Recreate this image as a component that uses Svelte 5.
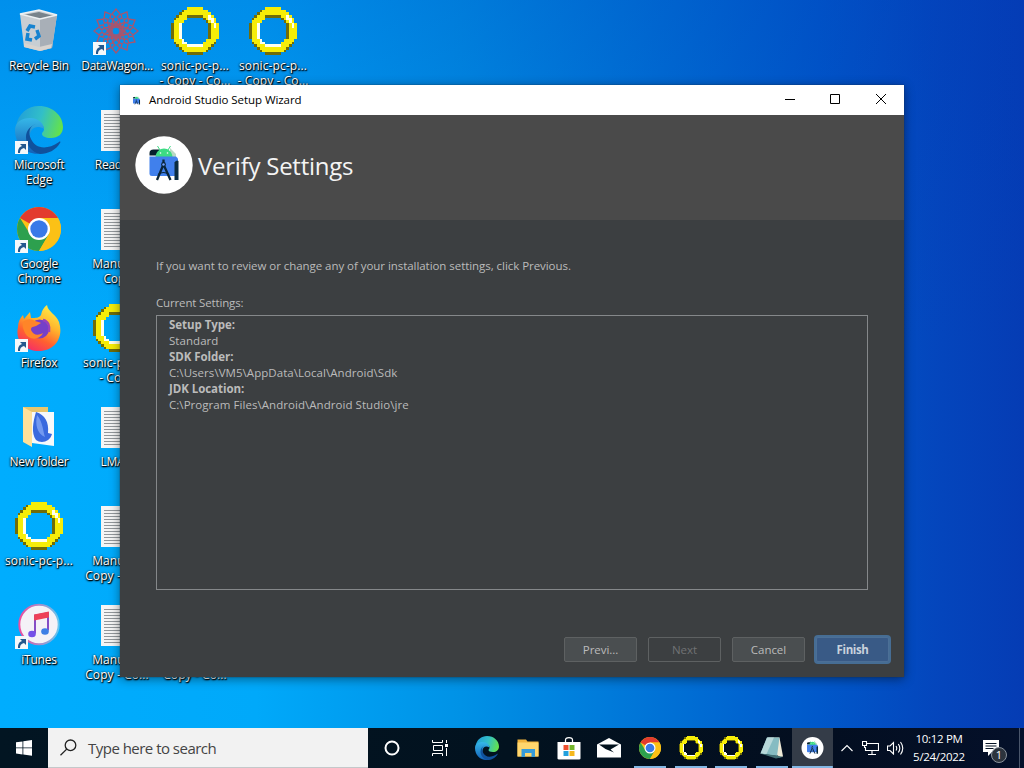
<script>
	// desktop icons, one array per column; null leaves a grid cell empty
	const columns = [
		[
			{ icon: 'bin', lines: ['Recycle Bin'] },
			{ icon: 'edge', lines: ['Microsoft', 'Edge'], shortcut: true },
			{ icon: 'chrome', lines: ['Google', 'Chrome'], shortcut: true },
			{ icon: 'firefox', lines: ['Firefox'], shortcut: true },
			{ icon: 'folder', lines: ['New folder'] },
			{ icon: 'ring', lines: ['sonic-pc-p...'] },
			{ icon: 'itunes', lines: ['iTunes'], shortcut: true }
		],
		[
			{ icon: 'wagon', lines: ['DataWagon...'], shortcut: true },
			{ icon: 'doc', lines: ['Readme'] },
			{ icon: 'doc', lines: ['Manual -', 'Copy'] },
			{ icon: 'ring', lines: ['sonic-pc-p...', '- Copy'] },
			{ icon: 'doc', lines: ['LMAO'] },
			{ icon: 'doc', lines: ['Manual -', 'Copy - Co...'] },
			{ icon: 'doc', lines: ['Manual -', 'Copy - Co...'] }
		],
		[
			{ icon: 'ring', lines: ['sonic-pc-p...', '- Copy - Co...'] },
			null, null, null, null, null,
			{ icon: 'doc', lines: ['Manual -', 'Copy - Co...'] }
		],
		[{ icon: 'ring', lines: ['sonic-pc-p...', '- Copy - Co...'] }]
	];

	const settings = [
		['Setup Type:', 'Standard'],
		['SDK Folder:', 'C:\\Users\\VM5\\AppData\\Local\\Android\\Sdk'],
		['JDK Location:', 'C:\\Program Files\\Android\\Android Studio\\jre']
	];

	const apps = [
		{ icon: 'edge' },
		{ icon: 'explorer' },
		{ icon: 'store' },
		{ icon: 'mail' },
		{ icon: 'chrome', open: true },
		{ icon: 'ring', open: true },
		{ icon: 'ring', open: true },
		{ icon: 'notepad', open: true },
		{ icon: 'studio', open: true, active: true }
	];

	// ring sprite on an 18x18 grid
	function ringShade(x, y) {
		const dx = x - 8.5;
		const dy = y - 8.5;
		const r = Math.hypot(dx, dy);
		if (r > 9.1 || r < 5.5) return null;
		const side = dx - dy; // positive towards the top right
		if (r > 8.4 && side < 5) return '#706c08';
		if (r < 6.3 && side > 1) return '#706c08';
		if (r < 6.4 && side < -1) return '#fffff0';
		if (r > 7 && r < 8.2 && side > 8 && dx > 5) return '#fffff0';
		return '#f6ed08';
	}
	const pixels = [];
	for (let y = 0; y < 18; y++) {
		for (let x = 0; x < 18; x++) {
			const fill = ringShade(x, y);
			if (fill) pixels.push({ x, y, fill });
		}
	}

	const petals = [0, 30, 60, 90, 120, 150, 180, 210, 240, 270, 300, 330];
	const docLines = [8, 11, 14, 17, 20, 23, 26, 29, 32, 35, 38, 41];
</script>

{#snippet studioArt()}
	<path d="M14.500 17q0-3.500 4-3.500h6v6h-10z" fill="#06202c" />
	<path d="M35 12l6 6v4h-6z" fill="#b9d8c5" />
	<path d="M20.500 21c1-11.500 16-11.500 17 0z" fill="#3ddc84" />
	<path d="M22.500 10l2.500 4M35.500 10L33 14" stroke="#3ddc84" stroke-width="1" />
	<circle cx="25.500" cy="17" r=".8" fill="#fff" /><circle cx="32.500" cy="17" r=".8" fill="#fff" />
	<path d="M14.500 20.500H41l2 2V40H17q-2.500 0-2.500-2.500z" fill="#4080ec" />
	<path d="M39.500 26.500q2-3 4-1.500v19h-4z" fill="#0a2c40" />
	<path d="M28.500 23.500V28M27.800 30L22 44M29.200 30L35.500 44" fill="none" stroke="#0a2538" stroke-width="2.300" />
	<path d="M23 38.500q5.500-4 11 0" fill="none" stroke="#0a2538" stroke-width="1.100" />
	<circle cx="28.500" cy="28.500" r="2.400" fill="#0a2538" /><circle cx="28.500" cy="28.500" r="1.200" fill="#6fa0ff" />
{/snippet}

{#snippet art(name)}
	<svg viewBox="0 0 48 48" class="art">
		{#if name === 'bin'}
			<path d="M5 7l19-4 18 5-5 33-12 3-16-4z" fill="#c8ced3" />
			<path d="M25 11l17-3-5 33-12 3z" fill="#a8afb7" />
			<path d="M8 8l16-3 15 4-15 3z" fill="#78838b" />
			<path d="M5 7l19-4 18 5-17 4z" fill="none" stroke="#edf1f3" stroke-width="1.500" />
			<path d="M9 36l15 4 13-3-1 4-11 3-16-4z" fill="#d8d4d0" />
			<path d="M12 24l3-5 5 1M22 23l2 6-4 3M17 33l-5-1 1-6" fill="none" stroke="#1683d0" stroke-width="3.500" />
		{:else if name === 'wagon'}
			<g fill="none" stroke="#a9556d" stroke-width="1.300">
				{#each petals as angle}
					<path transform="rotate({angle} 23 24)" d="M23 17l-3-5 2-2-3-3 4-5 4 5-3 3 2 2-3 5M19 21l4-6 4 6" />
				{/each}
				<circle cx="23" cy="24" r="7" /><circle cx="23" cy="24" r="4" />
			</g>
		{:else if name === 'ring'}
			<g shape-rendering="crispEdges" transform="scale(2.6667)">
				{#each pixels as p}
					<rect x={p.x} y={p.y} width="1" height="1" fill={p.fill} />
				{/each}
			</g>
		{:else if name === 'edge'}
			<defs>
				<linearGradient id="edgeTop" x1="0" y1=".4" x2="1" y2=".6">
					<stop offset="0" stop-color="#229fd8" /><stop offset=".5" stop-color="#32bfc8" /><stop offset="1" stop-color="#66e346" />
				</linearGradient>
				<linearGradient id="edgeSide" x1="0" y1="0" x2="0" y2="1">
					<stop offset="0" stop-color="#36b7e8" /><stop offset="1" stop-color="#1260b8" />
				</linearGradient>
			</defs>
			<path d="M1 21C3 7 13 0 24 0c14 0 24 10 24 21 0 7-5 11-12 11-6 0-9-2-9-4 0-2 2-2 2-5 0-5-6-8-13-8C8 15 2 18 1 21z" fill="url(#edgeTop)" />
			<path d="M0 24c0-8 7-12 15-12 9 0 14 6 14 11-8-5-15 0-14 9 1 8 6 13 14 15C13 51 0 40 0 24z" fill="url(#edgeSide)" />
			<path d="M21 18c-7 2-8 9-5 15 4 9 15 12 28 3 1-1 2 0 1 1-4 7-12 11-20 11-9-2-14-10-14-17 0-6 4-11 10-13z" fill="#10519c" />
		{:else if name === 'chrome'}
			<circle cx="24" cy="24" r="22" fill="#fbc116" />
			<path d="M24 24L5 13A22 22 0 0 1 43 13H24z" fill="#e33b2e" />
			<path d="M5 13A22 22 0 0 0 24 46l10-17-19 0z" fill="#2da04e" />
			<path d="M24 13h19a22 22 0 0 1-19 33l10-17z" fill="#fbc116" />
			<circle cx="24" cy="24" r="11" fill="#fff" /><circle cx="24" cy="24" r="8.700" fill="#3979e8" />
		{:else if name === 'firefox'}
			<defs>
				<linearGradient id="fox" x1=".8" y1="0" x2=".3" y2="1">
					<stop offset="0" stop-color="#fff14a" /><stop offset=".4" stop-color="#ffb42c" /><stop offset=".7" stop-color="#ff612f" /><stop offset="1" stop-color="#f52d68" />
				</linearGradient>
			</defs>
			<path d="M8 11l1 4 6-7 1 6c5 0 8 0 10-3 1-5 3-8 6-10 1 7 9 9 12 17 5 15-4 29-20 29C9 47 0 36 3 23c0-5 2-9 5-12z" fill="url(#fox)" />
			<circle cx="24.500" cy="25" r="9.500" fill="#7540c8" />
			<path d="M8 18c4-4 9-3 12-1 2 1 5 1 6 2l-5 3c-2 1-5 0-5 4 2 5 7 6 12 3-3 7-14 8-18 0-2-4-3-8-2-11z" fill="#ff8528" />
			<path d="M28 16c5 1 7 6 6 12" fill="none" stroke="#9a42bb" stroke-width="2.500" />
		{:else if name === 'folder'}
			<path d="M8 4h25v35H8z" fill="#e8c66d" />
			<path d="M17 9h22v34l-22-3z" fill="#f7f9fa" />
			<path d="M8 4l9 5v35l-9-5z" fill="#ffe09a" />
			<path d="M21 9c9 3 13 10 12 21l4 1c-2 8-11 10-16 6-5-7-3-18 0-28z" fill="#3a6ade" />
			<path d="M22 12c6 7 6 17 8 22-8-3-10-13-8-22z" fill="#7399f0" />
		{:else if name === 'itunes'}
			<defs><linearGradient id="tunes"><stop offset="0" stop-color="#ef4d9f" /><stop offset="1" stop-color="#65c5ee" /></linearGradient></defs>
			<g transform="translate(0 2.500)">
				<circle cx="24" cy="21" r="19.700" fill="#f4f2f7" stroke="url(#tunes)" stroke-width="2" />
				<path d="M20 30V12l13-2.500V27" fill="none" stroke="#7a3cc0" stroke-width="1.800" />
				<path d="M19.100 11l14.800-3v6l-14.800 3z" fill="#ee4058" />
				<ellipse cx="17" cy="30.500" rx="3.800" ry="3.200" fill="#7450e8" /><ellipse cx="30" cy="28" rx="3.800" ry="3.200" fill="#3d7fe5" />
			</g>
		{:else if name === 'doc'}
			<path d="M8 4h32v41H8z" fill="#f5f5f5" />
			{#each docLines as y}
				<path d="M11 {y}.5h26" stroke="#92979b" stroke-width="1" />
			{/each}
		{:else if name === 'explorer'}
			<path d="M3 7h17l3 4h22v30H3z" fill="#f1b33c" />
			<path d="M3 13h42v28H3z" fill="#ffd66d" />
			<path d="M11 26h27v16h-7v-8H18v8h-7z" fill="#369bd8" />
		{:else if name === 'store'}
			<path d="M17 12V8q0-5 7-5t7 5v4" fill="none" stroke="#fff" stroke-width="2.500" />
			<path d="M1 12h46v33q0 2-3 2H4q-3 0-3-2z" fill="#fff" />
			<path d="M13 18h10v10H13z" fill="#ed502f" /><path d="M25 18h10v10H25z" fill="#73b52b" />
			<path d="M13 30h10v10H13z" fill="#22a0dd" /><path d="M25 30h10v10H25z" fill="#f6b81c" />
		{:else if name === 'mail'}
			<path d="M0 17L24 4l24 13v26H0z" fill="#fff" />
			<path d="M4 17h40L27 27l7 6-17-7z" fill="#03121e" />
		{:else if name === 'notepad'}
			<path d="M16 3h23l7 38-9 2z" fill="#ede9d6" />
			<path d="M14 3h25l-5 37-33-5z" fill="#86bcc2" />
			<path d="M14 3h14L13 36 1 35z" fill="#b8d8da" />
			<path d="M1 35l33 4 12 3-14 3z" fill="#416e73" />
		{:else if name === 'studio'}
			<circle cx="23" cy="24" r="22" fill="#fff" />
			<g transform="translate(1 2) scale(.76)">{@render studioArt()}</g>
		{/if}
	</svg>
{/snippet}

<div class="screen">
	<div class="desktop">
		{#each columns as column}
			<div class="column">
				{#each column as item}
					<div class="item">
						{#if item}
							<div class="picture">
								{@render art(item.icon)}
								{#if item.shortcut}
									<svg class="arrow" viewBox="0 0 13 13">
										<path d="M0 0h13v13H0z" fill="#f5f8fa" />
										<path d="M3 12c0-4 1-6 4-7L5 3h6v6L9 7c-3 1-4 2-4 5z" fill="#24588e" />
									</svg>
								{/if}
							</div>
							{#each item.lines as line}
								<span class:wide={line.includes('-')}>{line}</span>
							{/each}
						{/if}
					</div>
				{/each}
			</div>
		{/each}
	</div>

	<div class="window">
		<div class="titlebar">
			<svg class="small-logo" viewBox="12 9 34 37">{@render studioArt()}</svg>
			<span>Android Studio Setup Wizard</span>
			<div class="controls">
				<svg viewBox="0 0 46 30"><path d="M19 14.500h10" /></svg>
				<svg viewBox="0 0 46 30"><path d="M18.500 9.500h9v9h-9z" /></svg>
				<svg viewBox="0 0 46 30"><path d="M18 9l10 10M28 9L18 19" /></svg>
			</div>
		</div>
		<div class="header">
			<svg class="logo" viewBox="0 0 58 58">
				<circle cx="29" cy="29" r="28.700" fill="#fff" />
				{@render studioArt()}
			</svg>
			<h1>Verify Settings</h1>
		</div>
		<div class="content">
			<p>If you want to review or change any of your installation settings, click Previous.</p>
			<p class="caption">Current Settings:</p>
			<div class="summary">
				{#each settings as [label, value]}
					<b>{label}</b>
					<span>{value}</span>
				{/each}
			</div>
			<div class="buttons">
				<button>Previ...</button>
				<button disabled>Next</button>
				<button>Cancel</button>
				<button class="primary">Finish</button>
			</div>
		</div>
	</div>

	<div class="taskbar">
		<div class="start">
			<svg width="16" height="16" viewBox="0 0 16 16" fill="#fff">
				<path d="M0 2.300l6.500-.9v6.100H0zM7.300 1.300L16 0v7.500H7.300zM0 8.300h6.500v6.100L0 13.500zM7.300 8.300H16v7.500l-8.700-1.200z" />
			</svg>
		</div>
		<div class="search">
			<svg width="17" height="17" viewBox="0 0 17 17" fill="none" stroke="#222" stroke-width="1.300">
				<circle cx="10.500" cy="6.300" r="5.300" /><path d="M6.700 10.100L.5 16.300" />
			</svg>
			<span>Type here to search</span>
		</div>
		<div class="system">
			<svg width="16" height="16" viewBox="0 0 16 16"><circle cx="8" cy="8" r="6.500" fill="none" stroke="#fff" stroke-width="2" /></svg>
		</div>
		<div class="system">
			<svg width="17" height="16" viewBox="0 0 17 16" fill="none" stroke="#fff" stroke-width="1">
				<path d="M.5 0v2.500h10V0M.5 16v-2.500h10V16M1.500 5.500h9v5h-9zM14.500 0v3M14.500 8v8" />
				<path d="M13 4h3v3h-3z" fill="#fff" stroke="none" />
			</svg>
		</div>
		<div class="apps">
			{#each apps as app}
				<div class="app" class:open={app.open} class:active={app.active}>{@render art(app.icon)}</div>
			{/each}
		</div>
		<div class="tray">
			<svg width="12" height="8" viewBox="0 0 12 8"><path d="M.5 7L6 1.500 11.500 7" /></svg>
			<svg width="17" height="14" viewBox="0 0 17 14"><path d="M5 2.500h11.500v7H3.500V6M10 9.500v3.500M6 13.500h8M.5.500h4v4h-4zM2.500 4.500V7" /></svg>
			<svg width="17" height="14" viewBox="0 0 17 14"><path d="M.5 5v4.500H3L6.500 13V1.500L3 5zM9 5q1.500 2.300 0 4.500M11.300 3q3 4.200 0 8.500M13.500 1q4.500 6.200 0 12.500" /></svg>
		</div>
		<div class="clock"><span>10:12 PM</span><span>5/24/2022</span></div>
		<div class="notice">
			<svg width="17" height="17" viewBox="0 0 17 17">
				<path d="M0 0h16v12H9l-4 4v-4H0z" fill="#fff" />
				<path d="M2.500 3.500h11M2.500 6h11M2.500 8.500h8" stroke="#061426" />
			</svg>
			<span class="badge">1</span>
		</div>
		<div class="peek"></div>
	</div>
</div>

<style>
	:global(body) {
		margin: 0;
	}

	.screen {
		position: relative;
		width: 1024px;
		height: 768px;
		overflow: hidden;
		display: flex;
		flex-direction: column;
		font-family: 'Open Sans', 'Noto Sans', sans-serif;
		font-size: 12px;
		background:
			linear-gradient(180deg, rgba(0, 60, 185, 0.26), rgba(0, 100, 220, 0) 45%),
			linear-gradient(90deg, #00adfe 0%, #00a9fa 25%, #0092e6 45%, #0076d8 62%, #0058ca 80%, #0445bc 92%, #053cb4 100%);
	}

	.desktop {
		display: flex;
		height: 728px;
	}
	.column {
		width: 78px;
	}
	.item {
		height: 92px;
		padding-top: 7px;
		display: flex;
		flex-direction: column;
		align-items: center;
	}
	.item span {
		line-height: 15px;
		letter-spacing: -0.25px;
		color: #fff;
		white-space: nowrap;
		text-shadow: 1px 1px 1px #000, 0 1px 2px #000, 0 0 2px rgba(0, 0, 0, 0.7);
	}
	.item .wide {
		letter-spacing: 0.1px;
	}
	.picture {
		position: relative;
		width: 48px;
		height: 48px;
		margin-bottom: 3px;
	}
	.art {
		display: block;
		width: 100%;
		height: 100%;
	}
	.arrow {
		position: absolute;
		left: 0;
		bottom: 0;
		width: 13px;
		height: 13px;
	}

	/* the wizard floats over the desktop */
	.window {
		position: absolute;
		left: 120px;
		top: 85px;
		width: 784px;
		height: 592px;
		display: flex;
		flex-direction: column;
		background: #3c3f41;
		color: #bbb;
		box-shadow: 0 0 1px #234, 0 2px 10px rgba(0, 0, 0, 0.45);
	}
	.titlebar {
		height: 30px;
		display: flex;
		align-items: center;
		background: #fff;
		color: #000;
		font-size: 11.5px;
		letter-spacing: -0.06px;
	}
	.titlebar span {
		padding-bottom: 2px;
	}
	.small-logo {
		width: 9px;
		height: 9px;
		margin: 0 8px 0 12px;
	}
	.controls {
		margin-left: auto;
		display: flex;
	}
	.controls svg {
		width: 46px;
		height: 30px;
		fill: none;
		stroke: #000;
		stroke-width: 1;
	}
	.header {
		height: 105px;
		display: flex;
		align-items: flex-start;
		background: #4a4a4a;
	}
	.logo {
		width: 58px;
		height: 58px;
		margin: 21px 5px 0 15px;
	}
	h1 {
		margin: 34px 0 0;
		font-size: 24px;
		line-height: 34px;
		font-weight: 400;
		letter-spacing: -0.25px;
		color: #f4f4f4;
	}
	.content {
		flex: 1;
		display: flex;
		flex-direction: column;
		padding: 38px 36px 0;
		font-size: 11.5px;
		letter-spacing: -0.05px;
	}
	p {
		margin: 0;
		line-height: 16px;
	}
	.caption {
		margin-top: 21px;
		letter-spacing: -0.15px;
	}
	.summary {
		margin-top: 4px;
		padding: 1px 12px 0;
		box-sizing: border-box;
		height: 275px;
		border: 1px solid #85888a;
		display: flex;
		flex-direction: column;
		line-height: 16px;
	}
	.summary span {
		letter-spacing: 0.05px;
	}
	.buttons {
		display: flex;
		justify-content: flex-end;
		gap: 11px;
		margin: 47px -21px 0 0;
	}
	button {
		width: 73px;
		height: 25px;
		padding: 0;
		border: 1px solid #5e6162;
		border-radius: 2px;
		background: #4a4e50;
		color: #bbb;
		font: inherit;
		letter-spacing: inherit;
	}
	button:disabled {
		background: #3c3f41;
		color: #707274;
	}
	.primary {
		border-color: #4c6f96;
		background: #395a86;
		color: #c8d2dd;
		font-weight: 700;
		letter-spacing: -0.4px;
		box-shadow: 0 0 0 2px #466d94;
	}

	.taskbar {
		height: 40px;
		display: flex;
		background: linear-gradient(90deg, #021522, #02121f 50%, #030e20 80%, #04102a);
		color: #fff;
	}
	.start,
	.system {
		width: 48px;
		display: flex;
		align-items: center;
		justify-content: center;
	}
	.search {
		width: 320px;
		box-sizing: border-box;
		display: flex;
		align-items: center;
		gap: 11px;
		padding-left: 12px;
		border: solid #c4c8ca;
		border-width: 0 0 1px;
		background: #f2f2f2;
		color: #444;
		font-size: 15px;
		letter-spacing: -0.52px;
	}
	.apps {
		display: flex;
		width: 366px;
		margin-left: 3px;
	}
	.app {
		flex: 1;
		display: flex;
		align-items: center;
		justify-content: center;
		box-sizing: border-box;
	}
	.app .art {
		width: 24px;
		height: 24px;
	}
	.open {
		background: linear-gradient(#83b7e4, #83b7e4) center bottom / 32px 2px no-repeat;
	}
	.active {
		background: linear-gradient(#83b7e4, #83b7e4) center bottom / 100% 2px no-repeat, #343c48;
	}
	.tray {
		width: 63px;
		margin-left: 8px;
		display: flex;
		align-items: center;
		justify-content: space-between;
	}
	.tray svg {
		fill: none;
		stroke: #fff;
		stroke-width: 1.1;
	}
	.clock {
		width: 70px;
		display: flex;
		flex-direction: column;
		align-items: center;
		justify-content: center;
		font-size: 11.5px;
		line-height: 18px;
		letter-spacing: -0.3px;
	}
	.notice {
		position: relative;
		margin: 12px 0 0 9px;
		width: 28px;
	}
	.badge {
		position: absolute;
		left: 8px;
		top: 7px;
		width: 14px;
		height: 14px;
		border: 1px solid #8a929c;
		border-radius: 50%;
		background: #2c333d;
		font-size: 11px;
		line-height: 14px;
		text-align: center;
	}
	.peek {
		margin-left: auto;
		width: 4px;
		border-left: 1px solid #4a566b;
	}
</style>
